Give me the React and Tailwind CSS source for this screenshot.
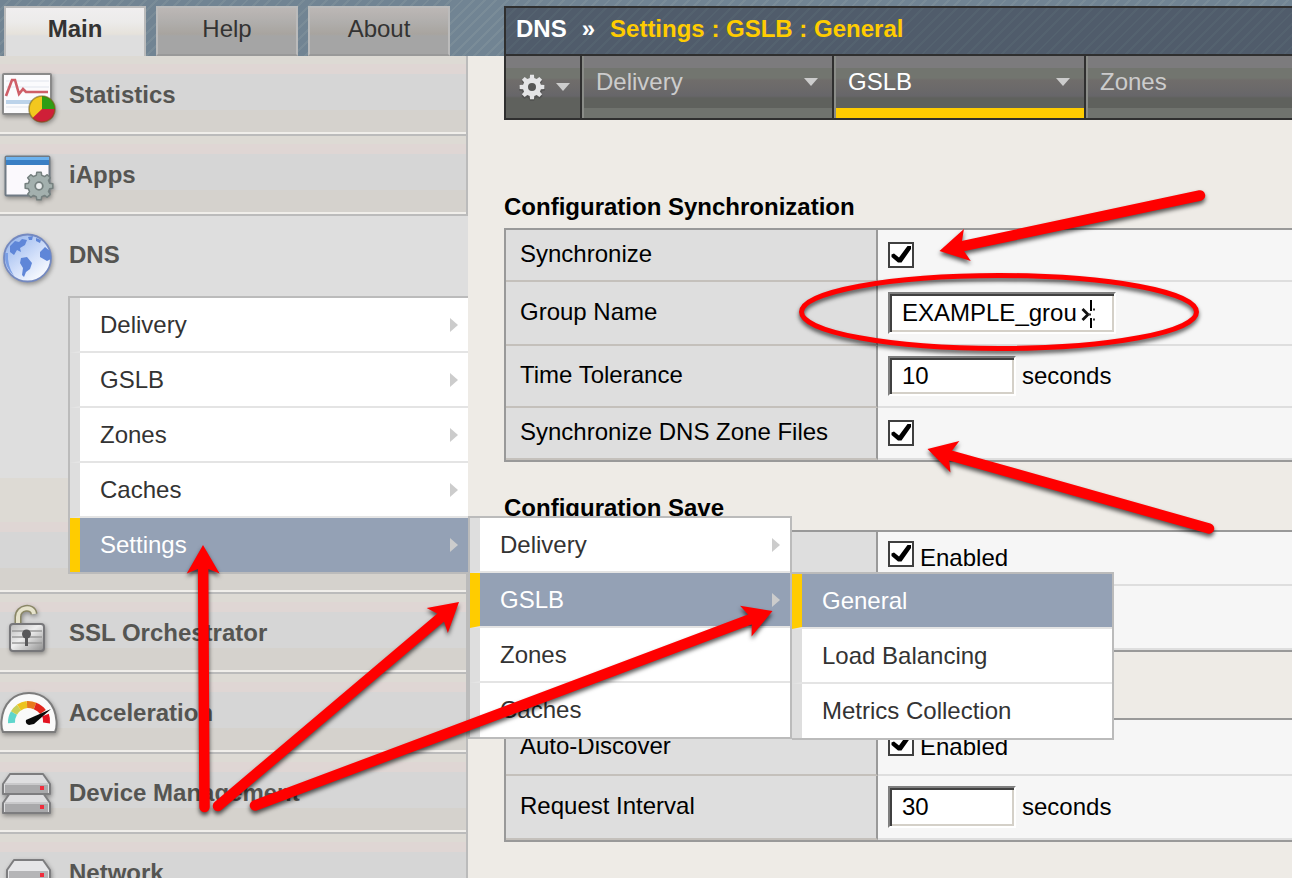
import React from "react";

const svgBox = "h-[76px] w-[69px] shrink-0 drop-shadow-[1px_2px_2px_rgba(0,0,0,0.35)]";

function gearPath(cx, cy, outer, inner, teeth) {
  const pts = [];
  const step = (Math.PI * 2) / teeth;
  for (let i = 0; i < teeth; i++) {
    const a = i * step - Math.PI / 2;
    [
      [-0.32, inner],
      [-0.2, outer],
      [0.2, outer],
      [0.32, inner],
    ].forEach(([f, r]) => {
      pts.push(`${(cx + r * Math.cos(a + f * step)).toFixed(2)},${(cy + r * Math.sin(a + f * step)).toFixed(2)}`);
    });
  }
  return `M${pts.join("L")}Z`;
}

function StatisticsIcon() {
  return (
    <svg className={svgBox} viewBox="0 0 69 76" aria-hidden="true">
      <rect x="3" y="17" width="48" height="40" rx="1" fill="#fbfbfd" stroke="#8a8a8a" strokeWidth="2" />
      <path d="M6 24H49M6 30H49M6 50H49" stroke="#eef0f5" strokeWidth="2" />
      <path d="M6 45H36" stroke="#bcd3ea" strokeWidth="4" />
      <path d="M6 39L12 23H15L19 37L23 32L26 35H48" fill="none" stroke="#cf5f68" strokeWidth="2.600" />
      <circle cx="42" cy="52" r="13" fill="#f2c81f" />
      <path d="M42 52V39A13 13 0 0 1 55 52Z" fill="#2f9e14" />
      <path d="M42 52H55A13 13 0 0 1 32.500 61Z" fill="#cf1f38" />
      <circle cx="42" cy="52" r="13" fill="none" stroke="#6b5a1c" strokeOpacity="0.55" strokeWidth="1.600" />
    </svg>
  );
}

function IAppsIcon() {
  return (
    <svg className={svgBox} viewBox="0 0 69 76" aria-hidden="true">
      <rect x="5.500" y="19.500" width="44" height="39" rx="1" fill="#fbf9fd" stroke="#707a84" strokeWidth="2" />
      <rect x="6" y="20" width="43" height="4" fill="#6cb2ee" />
      <rect x="6" y="23" width="43" height="5" fill="#3a7fc4" />
      <path d={gearPath(39, 49, 14, 11, 8)} fill="#a3b0ae" stroke="#75807f" strokeWidth="1.500" strokeLinejoin="round" />
      <circle cx="39" cy="49" r="3.800" fill="#eceff0" stroke="#75807f" strokeWidth="1.800" />
    </svg>
  );
}

function GlobeIcon() {
  return (
    <svg className={svgBox} viewBox="0 0 69 76" aria-hidden="true">
      <defs>
        <linearGradient id="globe" x1="0" y1="0" x2="0.8" y2="1">
          <stop offset="0" stopColor="#8caeea" />
          <stop offset="0.6" stopColor="#d3e0fa" />
          <stop offset="1" stopColor="#ffffff" />
        </linearGradient>
      </defs>
      <circle cx="27.500" cy="41" r="23.500" fill="url(#globe)" stroke="#7489c0" strokeWidth="1.800" />
      <path
        d="M10 29L15 24L19 25L22 22L27 23L25 28L20 31L21 35L17 33L14 38L10 35ZM28 20L33 19L32 23L29 23ZM21 41L27 40L32 46L30 52L26 55L24 60L22 58L23 51L20 46ZM40 35L45 30L50 34L51 42L47 44L40 40ZM36 21L41 23L40 26L36 24Z"
        fill="#5f86d8"
      />
      <path d="M5 36Q4 50 14 59Q7 48 8 36Z" fill="#7a9ee4" />
    </svg>
  );
}

function LockIcon() {
  return (
    <svg className={svgBox} viewBox="0 0 69 76" aria-hidden="true">
      <defs>
        <linearGradient id="lock" x1="0" y1="0" x2="1" y2="1">
          <stop offset="0" stopColor="#b9b9b9" />
          <stop offset="0.45" stopColor="#efefef" />
          <stop offset="1" stopColor="#8c8c8c" />
        </linearGradient>
      </defs>
      <path d="M18 30V22C18 12 33 10 34 19" fill="none" stroke="#8a8766" strokeWidth="7" />
      <path d="M18 30V22C18 12 33 10 34 19" fill="none" stroke="#e6e3cc" strokeWidth="4" />
      <rect x="10" y="29" width="34" height="27" rx="3" fill="url(#lock)" stroke="#77777a" strokeWidth="2" />
      <path d="M12 36H42M12 42H42M12 48H42" stroke="#9b9b9b" strokeWidth="1.400" />
      <circle cx="26.500" cy="39" r="4.500" fill="#58585a" />
      <path d="M25 40H28L28 51H25Z" fill="#58585a" />
    </svg>
  );
}

function GaugeIcon() {
  return (
    <svg className={svgBox} viewBox="0 0 69 76" aria-hidden="true">
      <path d="M3 57Q1 53 1.500 46C3 28 14 18 29 18S55 28 56.500 46Q57 53 55 57Z" fill="#fafafa" stroke="#7c7c7c" strokeWidth="2" strokeLinejoin="round" />
      <g fill="none" strokeWidth="7">
        <path d="M11.500 48A17.500 17.500 0 0 1 14 38" stroke="#5fd6cc" />
        <path d="M14 38A17.500 17.500 0 0 1 19 32.500" stroke="#c9cf58" />
        <path d="M19 32.500A17.500 17.500 0 0 1 27 29.500" stroke="#ecc31d" />
        <path d="M27 29.500A17.500 17.500 0 0 1 35 31" stroke="#e8791c" />
        <path d="M35 31A17.500 17.500 0 0 1 43 37" stroke="#e2261c" />
        <path d="M45.500 40A17.500 17.500 0 0 1 46.500 48" stroke="#e31220" />
      </g>
      <path d="M51 34L26 45Q25 49 29 50L34 49Z" fill="#0a0a0a" />
    </svg>
  );
}

function ServerUnit({ y }) {
  return (
    <g>
      <path d={`M3 ${y + 10}L10 ${y}H43L50 ${y + 10}V${y + 20}H3Z`} fill="#dedee0" stroke="#7d7d7f" strokeWidth="2" strokeLinejoin="round" />
      <rect x="5" y={y + 11} width="43" height="8" fill="#a9a9ab" />
      <rect x="5" y={y + 9} width="43" height="2" fill="#c9c9cb" />
      <rect x="40" y={y + 12} width="4" height="4" fill="#f02c3c" />
    </g>
  );
}

function DeviceIcon() {
  return (
    <svg className={svgBox} viewBox="0 0 69 76" aria-hidden="true">
      <ServerUnit y={38} />
      <ServerUnit y={19} />
    </svg>
  );
}

function NetworkIcon() {
  return (
    <svg className={svgBox} viewBox="0 0 69 76" aria-hidden="true">
      <path d="M7 35L14 25H43L50 35V56H7Z" fill="#e6e6e8" stroke="#7d7d7f" strokeWidth="2" strokeLinejoin="round" />
      <rect x="9" y="36" width="39" height="18" fill="#b5b5b7" />
      <rect x="40" y="38" width="4" height="4" fill="#f02c3c" />
    </svg>
  );
}

const rowBands =
  "bg-[linear-gradient(to_bottom,#dddad4_0_8px,#dfd6d4_8px_18px,#d6d6d6_18px_54px,#d5d2cd_54px_76px,#f0eeea_76px)]";

function SidebarRow({ icon, label }) {
  return (
    <a href="#" className={`flex h-20 shrink-0 items-center border-r-2 border-b-2 border-[#bbbbbb] font-bold text-[#555552] ${rowBands}`}>
      {icon}
      {label}
    </a>
  );
}

function MenuItem({ label, active, arrow, last, children }) {
  return (
    <li className="relative">
      <a
        href="#"
        className={`flex items-center justify-between border-l-[10px] pr-2.5 pl-5 ${
          last ? "h-[54px]" : "h-[55px] border-b-2 border-b-[#e4e4e4]"
        } ${active ? "border-l-[#ffcc00] bg-[#94a1b5] text-white" : "border-l-[#dedede] bg-white text-[#333333]"}`}
      >
        {label}
        {arrow && (
          <svg className="h-3.5 w-2" viewBox="0 0 8 14" aria-hidden="true">
            <path d="M0 0L8 7L0 14Z" fill="#cccccc" />
          </svg>
        )}
      </a>
      {children}
    </li>
  );
}

function Tab({ label, active }) {
  return (
    <button
      type="button"
      className={
        active
          ? "w-[142px] border-2 border-b-0 border-[#bbbbbb] bg-[linear-gradient(to_bottom,#f0eeef_0,#ecebea_14px,#e6e2db_26px,#dedede_28px)] pb-1.5 font-bold text-[#333333]"
          : "w-[142px] border-2 border-[#bbbbbb] border-b-[#999999] bg-[linear-gradient(to_bottom,#bcb7b5_0,#b0aeac_14px,#a8a49f_26px,#a5a5a5_28px)] pb-1 text-[#333333]"
      }
    >
      {label}
    </button>
  );
}

function DownTriangle() {
  return (
    <svg className="h-2 w-3.5 shrink-0" viewBox="0 0 14 8" aria-hidden="true">
      <path d="M0 0H14L7 8Z" fill="#cccccc" />
    </svg>
  );
}

function SectionTab({ label, active, arrow }) {
  return (
    <div className={`flex border-l-2 border-l-[#8a8c88] ${arrow ? "w-[252px] shrink-0 border-r-2 border-r-[#2f2f2f]" : "min-w-0 flex-1"}`}>
      <button
        type="button"
        className={`flex flex-1 items-center justify-between border-b-[10px] bg-[linear-gradient(to_bottom,#7c7b7d_0_12px,#72756f_12px_22px,#706d6b_24px,#676669_40px,#5f615d_42px)] pr-3.5 pl-3 ${
          active ? "border-b-[#ffcc00] text-white" : "border-b-[#70736e] text-[#cccccc]"
        }`}
      >
        {label}
        {arrow && <DownTriangle />}
      </button>
    </div>
  );
}

function CheckBox({ id, label }) {
  return (
    <span className="grid shrink-0 grid-cols-[26px]">
      <input
        id={id}
        type="checkbox"
        defaultChecked
        aria-label={label}
        className="peer col-start-1 row-start-1 size-[26px] appearance-none border-2 border-[#404040] bg-white"
      />
      <svg className="pointer-events-none invisible col-start-1 row-start-1 size-[26px] peer-checked:visible" viewBox="0 0 26 26" aria-hidden="true">
        <path d="M3.500 12.500L6 11.500L11 15.500L19.500 4H23V7L13.500 20.500H10L3.500 15Z" fill="#000000" />
      </svg>
    </span>
  );
}

const inputLook =
  "border-2 border-t-[#7f7f7f] border-r-white border-b-white border-l-[#7f7f7f] bg-white pl-3 text-black outline-none shadow-[inset_2px_2px_0_#404040,inset_-2px_-2px_0_#d4d0c8]";

function SettingsTable({ className = "", children }) {
  return (
    <table className={`w-full border-separate border-spacing-0 border-y-2 border-l-2 border-[#999999] ${className}`}>
      <tbody>{children}</tbody>
    </table>
  );
}

function SettingRow({ height, label, htmlFor, valueClass = "", children }) {
  return (
    <tr>
      <td className={`w-[372px] border-r-2 border-b-2 border-r-[#999999] border-b-[#c4c0bb] bg-[#dedede] p-0 pb-0.5 pl-3.5 ${height}`}>
        {label && <label htmlFor={htmlFor}>{label}</label>}
      </td>
      <td className={`border-b-2 border-[#dedede] bg-[#f6f6f6] p-0 pl-2.5 ${valueClass}`}>{children}</td>
    </tr>
  );
}

function EnabledBox({ id }) {
  return (
    <div className="flex items-center gap-1.5">
      <span className="mb-1 flex">
        <CheckBox id={id} />
      </span>
      <label htmlFor={id} className="pt-1">
        Enabled
      </label>
    </div>
  );
}

function Arrow({ from, to }) {
  const dx = from[0] - to[0];
  const dy = from[1] - to[1];
  const len = Math.hypot(dx, dy);
  const ux = dx / len;
  const uy = dy / len;
  const at = (along, side) => `${to[0] + ux * along - uy * side} ${to[1] + uy * along + ux * side}`;
  return (
    <g>
      <path d={`M${at(20, 0)}L${from[0]} ${from[1]}`} stroke="#ff0000" strokeWidth="10.500" strokeLinecap="round" />
      <path d={`M${at(0, 0)}L${at(28.5, 16.4)}L${at(22, 0)}L${at(28.5, -16.4)}Z`} fill="#ff0000" />
    </g>
  );
}

function Annotations() {
  return (
    <svg className="pointer-events-none absolute inset-0 z-50 h-full w-full drop-shadow-[0_3px_2px_rgba(0,0,0,0.65)]" aria-hidden="true">
      <Arrow from={[1200, 195.5]} to={[939.5, 251]} />
      <Arrow from={[1209, 528.5]} to={[927.5, 449]} />
      <Arrow from={[204.5, 807]} to={[203, 545]} />
      <Arrow from={[218, 806]} to={[459, 602]} />
      <Arrow from={[255, 805.5]} to={[772.5, 611]} />
      <ellipse cx="999" cy="312" rx="197.500" ry="36.500" fill="none" stroke="#ff0000" strokeWidth="5" />
    </svg>
  );
}

export default function App() {
  return (
    <div className="relative flex h-screen overflow-hidden bg-[#eeebe6] bg-[repeating-linear-gradient(135deg,#718493_0_6px,#7a8c98_6px_8px)] bg-[length:100%_56px] bg-no-repeat font-['Liberation_Sans',Arial,sans-serif] text-2xl leading-7 text-black">
      <aside className="z-10 flex w-[468px] shrink-0 flex-col">
        <div className="flex h-14 shrink-0 gap-2.5 pt-1.5 pl-1">
          <Tab label="Main" active />
          <Tab label="Help" />
          <Tab label="About" />
        </div>
        <nav className="flex flex-col">
          <SidebarRow icon={<StatisticsIcon />} label="Statistics" />
          <SidebarRow icon={<IAppsIcon />} label="iApps" />
          <div className="shrink-0 border-b-2 border-[#bbbbbb] bg-[linear-gradient(to_top,#f0eeea_0_2px,#d5d2cd_2px_24px,#d6d6d6_24px_60px,#dfd6d4_60px_70px,#dddad4_70px_114px,#dedede_114px)]">
            <a href="#" className="flex h-20 items-center pb-0.5 font-bold text-[#555552]">
              <GlobeIcon />
              DNS
            </a>
            <ul className="ml-[68px] border-y-2 border-l-2 border-[#bbbbbb]">
              <MenuItem label="Delivery" arrow />
              <MenuItem label="GSLB" arrow />
              <MenuItem label="Zones" arrow />
              <MenuItem label="Caches" arrow />
              <MenuItem label="Settings" arrow active last>
                <ul className="absolute -top-0.5 left-full w-[324px] border-2 border-[#bbbbbb]">
                  <MenuItem label="Delivery" arrow />
                  <MenuItem label="GSLB" arrow active>
                    <ul className="absolute -top-px left-full ml-0.5 w-[322px] border-2 border-l-0 border-[#bbbbbb]">
                      <MenuItem label="General" active />
                      <MenuItem label="Load Balancing" />
                      <MenuItem label="Metrics Collection" last />
                    </ul>
                  </MenuItem>
                  <MenuItem label="Zones" />
                  <MenuItem label="Caches" last />
                </ul>
              </MenuItem>
            </ul>
            <div className="h-[18px] border-r-2 border-[#bbbbbb]" />
          </div>
          <SidebarRow icon={<LockIcon />} label="SSL Orchestrator" />
          <SidebarRow icon={<GaugeIcon />} label="Acceleration" />
          <SidebarRow icon={<DeviceIcon />} label="Device Management" />
          <SidebarRow icon={<NetworkIcon />} label="Network" />
        </nav>
      </aside>

      <main className="min-w-0 flex-1 pt-1.5 pl-9">
        <header className="border-y-2 border-l-2 border-[#2f2f2f]">
          <h1 className="flex h-[46px] items-center gap-[15px] bg-[repeating-linear-gradient(135deg,#505c6b_0_6px,#54626f_6px_8px)] pb-1 pl-2.5 font-bold text-white">
            <span>DNS</span>
            <span>»</span>
            <span className="whitespace-nowrap text-[#ffcc00]">Settings : GSLB : General</span>
          </h1>
          <div className="flex h-16 border-t-2 border-[#2f2f2f]">
            <button
              type="button"
              aria-label="Options"
              className="flex w-[76px] shrink-0 items-center gap-2.5 border-r-2 border-[#2f2f2f] bg-[linear-gradient(to_bottom,#7c7b7d_0_12px,#72756f_12px_22px,#706d6b_24px,#676669_40px,#5f615d_42px)] pl-3"
            >
              <svg className="size-7 shrink-0" viewBox="0 0 28 28" aria-hidden="true">
                <path d={gearPath(14, 15.5, 13, 10.5, 8)} fill="#4d4d4d" opacity="0.7" />
                <path fillRule="evenodd" d={`${gearPath(14, 14, 12.5, 9.2, 8)}M14 10A4 4 0 1 0 14 18A4 4 0 1 0 14 10Z`} fill="#e4e4e6" />
              </svg>
              <DownTriangle />
            </button>
            <SectionTab label="Delivery" arrow />
            <SectionTab label="GSLB" arrow active />
            <SectionTab label="Zones" />
          </div>
        </header>

        <h2 className="mt-[73px] mb-[7px] font-bold">Configuration Synchronization</h2>
        <SettingsTable>
          <SettingRow height="h-[52px]" label="Synchronize" htmlFor="sync">
            <CheckBox id="sync" />
          </SettingRow>
          <SettingRow height="h-16" label="Group Name" htmlFor="group">
            <div className="relative w-[228px]">
              <input id="group" type="text" defaultValue="EXAMPLE_grou" className={`h-[42px] w-full pr-9 ${inputLook}`} />
              <svg className="pointer-events-none absolute top-2 right-5 h-7 w-4" viewBox="0 0 16 28" aria-hidden="true">
                <path d="M2.500 9L8 14.500L2.500 20" fill="none" stroke="#111111" strokeWidth="2.800" />
                <path d="M11 0V11M11 18V28" stroke="#000000" strokeWidth="2" />
                <path d="M8 14.500L11 14.500M13 9.500H15M13 19.500H15" stroke="#333333" strokeWidth="2" />
              </svg>
            </div>
          </SettingRow>
          <SettingRow height="h-[62px]" label="Time Tolerance" htmlFor="tolerance">
            <div className="flex items-center gap-1.5">
              <input id="tolerance" type="text" defaultValue="10" className={`h-10 w-32 ${inputLook}`} />
              <span>seconds</span>
            </div>
          </SettingRow>
          <SettingRow height="h-[52px]" label="Synchronize DNS Zone Files" htmlFor="zones">
            <CheckBox id="zones" />
          </SettingRow>
        </SettingsTable>

        <h2 className="mt-8 mb-2 font-bold">Configuration Save</h2>
        <SettingsTable>
          <SettingRow height="h-[54px]" valueClass="pb-1">
            <EnabledBox id="save" />
          </SettingRow>
          <SettingRow height="h-16" />
        </SettingsTable>

        <SettingsTable className="mt-[66px]">
          <SettingRow height="h-14" label="Auto-Discover" htmlFor="discover" valueClass="pb-1">
            <EnabledBox id="discover" />
          </SettingRow>
          <SettingRow height="h-16" label="Request Interval" htmlFor="interval">
            <div className="flex items-center gap-1.5">
              <input id="interval" type="text" defaultValue="30" className={`h-[42px] w-32 ${inputLook}`} />
              <span>seconds</span>
            </div>
          </SettingRow>
        </SettingsTable>
      </main>

      <Annotations />
    </div>
  );
}
